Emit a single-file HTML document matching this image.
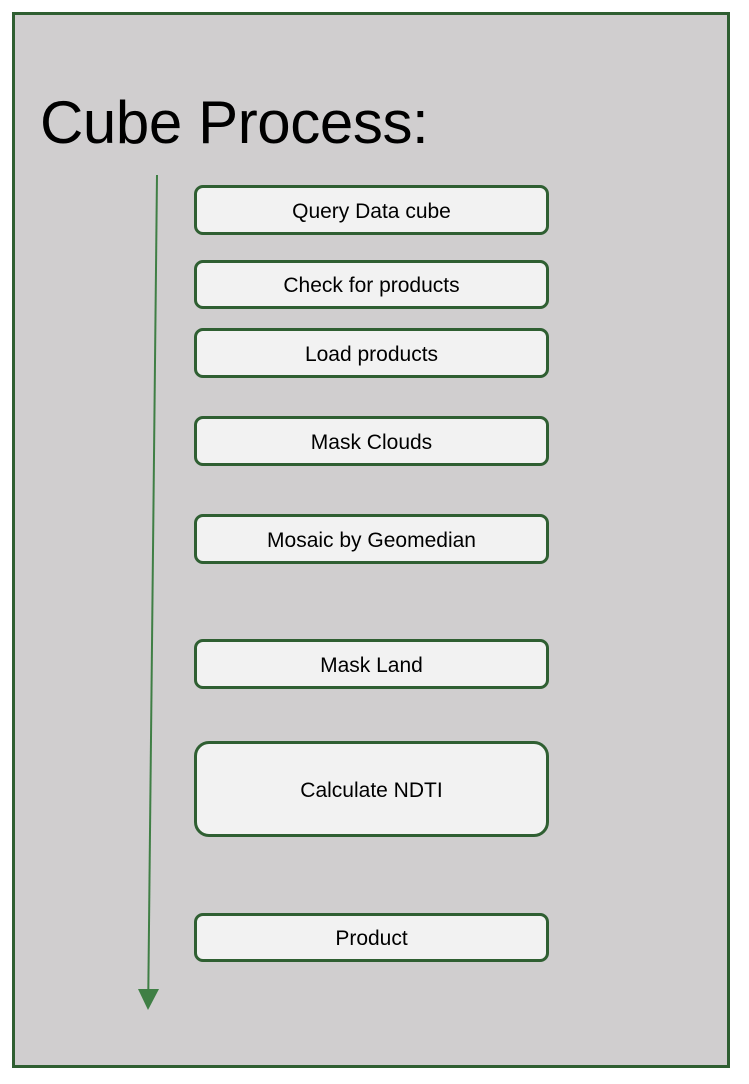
<!DOCTYPE html>
<html><head><style>
body{margin:0;width:749px;height:1084px;background:#fff;position:relative;font-family:"Liberation Sans",sans-serif;overflow:hidden}
.frame{position:absolute;left:12px;top:12px;width:712px;height:1050px;border:3px solid #2f5f32;background:#d0cecf}
.t{position:absolute;left:40px;top:83px;font-size:60px;color:#000;line-height:80px;letter-spacing:-0.4px}
.b{position:absolute;left:194px;border:3px solid #2f5f32;border-radius:9px;background:#f2f2f2;box-sizing:border-box;width:355px;display:flex;align-items:center;justify-content:center;font-size:21px;color:#000;padding-top:3px}
</style></head><body>
<div class="frame"></div>
<div class="t">Cube Process:</div>
<svg style="position:absolute;left:0;top:0" width="749" height="1084"><line x1="157" y1="175" x2="148.3" y2="992" stroke="#3f7f45" stroke-width="2"/><polygon points="138,989 159,989 148,1010" fill="#3f7f45"/></svg>
<div class="b" style="top:185px;height:50px">Query Data cube</div>
<div class="b" style="top:260px;height:49px">Check for products</div>
<div class="b" style="top:328px;height:50px">Load products</div>
<div class="b" style="top:416px;height:50px">Mask Clouds</div>
<div class="b" style="top:514px;height:50px">Mosaic by Geomedian</div>
<div class="b" style="top:639px;height:50px">Mask Land</div>
<div class="b" style="top:741px;height:96px;border-radius:15px">Calculate NDTI</div>
<div class="b" style="top:913px;height:49px">Product</div>
</body></html>
